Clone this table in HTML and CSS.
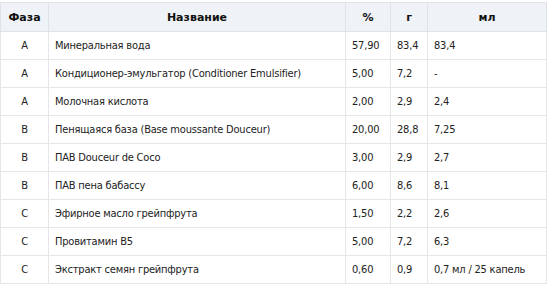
FILE: index.html
```html
<!DOCTYPE html>
<html lang="ru">
<head>
  <meta charset="UTF-8" />
  <title>Рецепт</title>
  <link rel="stylesheet" href="styles.css">
</head>
<body>
  <table class="recipe">
    <colgroup>
      <col class="c-phase">
      <col class="c-name">
      <col class="c-pct">
      <col class="c-g">
      <col class="c-ml">
    </colgroup>
    <thead>
      <tr>
        <th>Фаза</th>
        <th>Название</th>
        <th>%</th>
        <th>г</th>
        <th>мл</th>
      </tr>
    </thead>
    <tbody>
      <tr><td class="phase">A</td><td>Минеральная вода</td><td>57,90</td><td>83,4</td><td>83,4</td></tr>
      <tr><td class="phase">A</td><td>Кондиционер-эмульгатор (Conditioner Emulsifier)</td><td>5,00</td><td>7,2</td><td>-</td></tr>
      <tr><td class="phase">A</td><td>Молочная кислота</td><td>2,00</td><td>2,9</td><td>2,4</td></tr>
      <tr><td class="phase">B</td><td>Пенящаяся база (Base moussante Douceur)</td><td>20,00</td><td>28,8</td><td>7,25</td></tr>
      <tr><td class="phase">B</td><td>ПАВ Douceur de Coco</td><td>3,00</td><td>2,9</td><td>2,7</td></tr>
      <tr><td class="phase">B</td><td>ПАВ пена бабассу</td><td>6,00</td><td>8,6</td><td>8,1</td></tr>
      <tr><td class="phase">C</td><td>Эфирное масло грейпфрута</td><td>1,50</td><td>2,2</td><td>2,6</td></tr>
      <tr><td class="phase">C</td><td>Провитамин B5</td><td>5,00</td><td>7,2</td><td>6,3</td></tr>
      <tr><td class="phase">C</td><td>Экстракт семян грейпфрута</td><td>0,60</td><td>0,9</td><td>0,7 мл / 25 капель</td></tr>
    </tbody>
  </table>
</body>
</html>
```

FILE: styles.css
```css
body {
  margin: 0;
  padding: 2px 0 0 0;
  background: #fff;
  font-family: "DejaVu Sans Condensed", "DejaVu Sans", Tahoma, sans-serif;
  font-size: 11px;
  letter-spacing: -0.2px;
  color: #222;
}
.recipe {
  width: 546px;
  border-collapse: collapse;
  table-layout: fixed;
  border: 1px solid #e4e4e4;
}
.c-phase { width: 48px; }
.c-name { width: 297px; }
.c-pct { width: 45px; }
.c-g { width: 37px; }
.c-ml { width: 119px; }
.recipe th {
  background: #eff2f6;
  height: 28px;
  padding: 0;
  font-family: "DejaVu Sans", Tahoma, sans-serif;
  font-weight: bold;
  letter-spacing: 0;
  color: #111;
  text-align: center;
  border: 1px solid #e0e3e6;
}
.recipe td {
  height: 27px;
  padding: 0 0 0 6px;
  text-align: left;
  border: 1px solid #e6e6e6;
  white-space: nowrap;
}
.recipe td.phase {
  text-align: center;
  padding: 0;
}
```
